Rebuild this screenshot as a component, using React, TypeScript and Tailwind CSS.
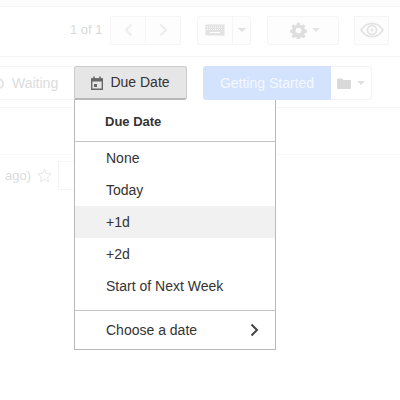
const menuItems = ['None', 'Today', '+1d', '+2d', 'Start of Next Week'];

function Caret({ className }: { className: string }) {
  return <span className={`w-0 h-0 border-x-[4px] border-x-transparent border-t-[4px] ${className}`} />;
}

function Chevron({ color, flip }: { color: string; flip?: boolean }) {
  return (
    <svg width="9" height="14" viewBox="0 0 9 14" fill="none" className={flip ? 'rotate-180' : ''}>
      <path d="M1.500 1.500L7 7l-5.500 5.500" stroke={color} strokeWidth="2" />
    </svg>
  );
}

function CalendarIcon() {
  return (
    <svg width="12" height="14" viewBox="0 0 12 14" fill="none">
      <path d="M.7 3h10.600v10.300H.7z" stroke="#666" strokeWidth="1.400" />
      <path d="M.5 2.500h11v3H.5z" fill="#666" />
      <path d="M3 .5v3M9 .5v3" stroke="#666" strokeWidth="1.500" />
      <path d="M3 8h3v3H3z" fill="#666" />
    </svg>
  );
}

function KeyboardIcon() {
  return (
    <svg width="20" height="12" viewBox="0 0 20 12">
      <rect width="19" height="11" x="0.500" y="0.500" fill="#e2e2e2" />
      <path d="M2 3h16M2 5.500h16" stroke="#fff" strokeWidth="1" strokeDasharray="1 1" />
      <path d="M5 8.500h10" stroke="#fff" strokeWidth="1.200" />
    </svg>
  );
}

function GearIcon() {
  return (
    <svg width="17" height="17" viewBox="0 0 24 24">
      <path
        fillRule="evenodd"
        fill="#dedede"
        d="M10 1h4l.6 3.100 2 .8 2.600-1.800 2.800 2.800-1.800 2.600.8 2 3 .6v4l-3 .6-.8 2 1.800 2.600-2.800 2.800-2.600-1.800-2 .8-.6 3h-4l-.6-3-2-.8-2.600 1.800-2.800-2.800 1.800-2.600-.8-2-3-.6v-4l3-.6.8-2-1.800-2.600 2.800-2.800 2.600 1.800 2-.8zM12 8a4 4 0 1 0 0 8 4 4 0 0 0 0-8z"
      />
    </svg>
  );
}

function EyeIcon() {
  return (
    <svg width="24" height="16" viewBox="0 0 24 16" fill="none">
      <path d="M1 8c3-4.500 6.500-6.700 11-6.700S20 3.500 23 8c-3 4.500-6.500 6.700-11 6.700S4 12.500 1 8z" stroke="#e4e4e4" strokeWidth="1.800" />
      <circle cx="12" cy="8" r="4.500" stroke="#e4e4e4" strokeWidth="1.800" />
      <circle cx="12" cy="8" r="1.600" fill="#e4e4e4" />
    </svg>
  );
}

function FolderIcon() {
  return (
    <svg width="14" height="11" viewBox="0 0 14 11">
      <path d="M0 1.500A1 1 0 0 1 1 .5h4l1.500 1.500H13a1 1 0 0 1 1 1V10a1 1 0 0 1-1 1H1a1 1 0 0 1-1-1z" fill="#d9d9d9" />
    </svg>
  );
}

function StarIcon() {
  return (
    <svg width="15" height="15" viewBox="0 0 15 15" fill="none">
      <path d="M7.500 1.200l1.900 4.200 4.600.5-3.400 3.100.9 4.500-4-2.300-4 2.300.9-4.500L1 5.900l4.600-.5z" stroke="#e8e8e8" strokeWidth="1" />
    </svg>
  );
}

export default function App() {
  return (
    <div className="relative w-[400px] h-[400px] overflow-hidden bg-white font-['Liberation_Sans',Arial,sans-serif]">
      <div className="h-[7px] bg-[#fcfcfc] border-b border-[#f5f5f5]" />

      <div className="h-[50px] flex items-center border-b border-[#f5f5f5] pl-[70px] pb-[3px]">
        <span className="text-[13px] text-[#d8d8d8] w-[40px]">1 of 1</span>
        <div className="flex w-[71px] h-[29px] border border-[#f5f5f5] rounded-[2px] bg-[#fdfdfd]">
          <div className="flex-1 flex items-center justify-center border-r border-[#f5f5f5]">
            <Chevron color="#ededed" flip />
          </div>
          <div className="flex-1 flex items-center justify-center">
            <Chevron color="#ededed" />
          </div>
        </div>
        <div className="ml-[16px] flex w-[54px] h-[29px] border border-[#f5f5f5] rounded-[2px] bg-[#fdfdfd]">
          <div className="w-[35px] flex items-center justify-center border-r border-[#f5f5f5]">
            <KeyboardIcon />
          </div>
          <div className="flex-1 flex items-center justify-center">
            <Caret className="border-t-[#e2e2e2]" />
          </div>
        </div>
        <div className="ml-[16px] flex items-center justify-center gap-[5px] pl-[4px] w-[72px] h-[29px] border border-[#f5f5f5] rounded-[2px] bg-[#fdfdfd]">
          <GearIcon />
          <Caret className="border-t-[#e6e6e6]" />
        </div>
        <div className="ml-[15px] flex items-center justify-center w-[35px] h-[29px] border border-[#f5f5f5] bg-[#fdfdfd]">
          <EyeIcon />
        </div>
      </div>

      <div className="h-[51px] flex items-start pt-[9px] border-b border-[#f7f7f7]">
        <div className="w-[75px] h-[34px] flex items-center border-y border-[#f5f5f5] -ml-px">
          <span className="w-[11px] h-[11px] -ml-[6px] mr-[8px] shrink-0 rounded-full border-2 border-[#e4e4e4]" />
          <span className="text-[14px] text-[#dcdcdc]">Waiting</span>
        </div>
        <div className="w-[113px] h-[34px] flex items-center justify-center gap-[7px] bg-[#e6e6e6] rounded-r-[3px] rounded-tl-[2px] border border-[#cccccc] border-b-2 border-b-[#b8b8b8]">
          <CalendarIcon />
          <span className="text-[14px] text-[#333333]">Due Date</span>
        </div>
        <div className="ml-[16px] w-[128px] h-[34px] flex items-center justify-center bg-[#d3e3fd] rounded-l-[3px]">
          <span className="text-[14px] text-[#f4f8ff]">Getting Started</span>
        </div>
        <div className="w-[41px] h-[34px] flex items-center justify-center gap-[6px] border border-l-0 border-[#f3f3f3] rounded-r-[3px]">
          <FolderIcon />
          <Caret className="border-t-[#e0e0e0]" />
        </div>
      </div>

      <div className="h-[47px] border-b border-[#f8f8f8]" />

      <div className="h-[29px] mt-[6px] pl-[5px] flex items-center">
        <span className="text-[13px] text-[#dcdcdc] w-[32px]">ago)</span>
        <StarIcon />
        <div className="ml-[6px] w-[17px] h-[29px] border border-[#f5f5f5]" />
      </div>

      <div className="absolute left-[74px] top-[100px] w-[202px] h-[250px] bg-white border border-[#b9b9b9] border-t-0 text-[14px] text-[#333333]">
        <div className="h-[42px] pt-[14px] pl-[30px] font-bold leading-[16px] text-[13px] border-b border-[#c4c4c4]">Due Date</div>
        <div>
          {menuItems.map((item) => (
            <div key={item} className={`h-[32px] leading-[32px] pl-[31px] ${item === '+1d' ? 'bg-[#f1f1f1]' : ''}`}>
              {item}
            </div>
          ))}
        </div>
        <div className="mt-[8px] border-t border-[#c4c4c4] h-[39px] flex items-center justify-between pl-[31px] pr-[16px]">
          <span>Choose a date</span>
          <Chevron color="#444444" />
        </div>
      </div>
    </div>
  );
}
